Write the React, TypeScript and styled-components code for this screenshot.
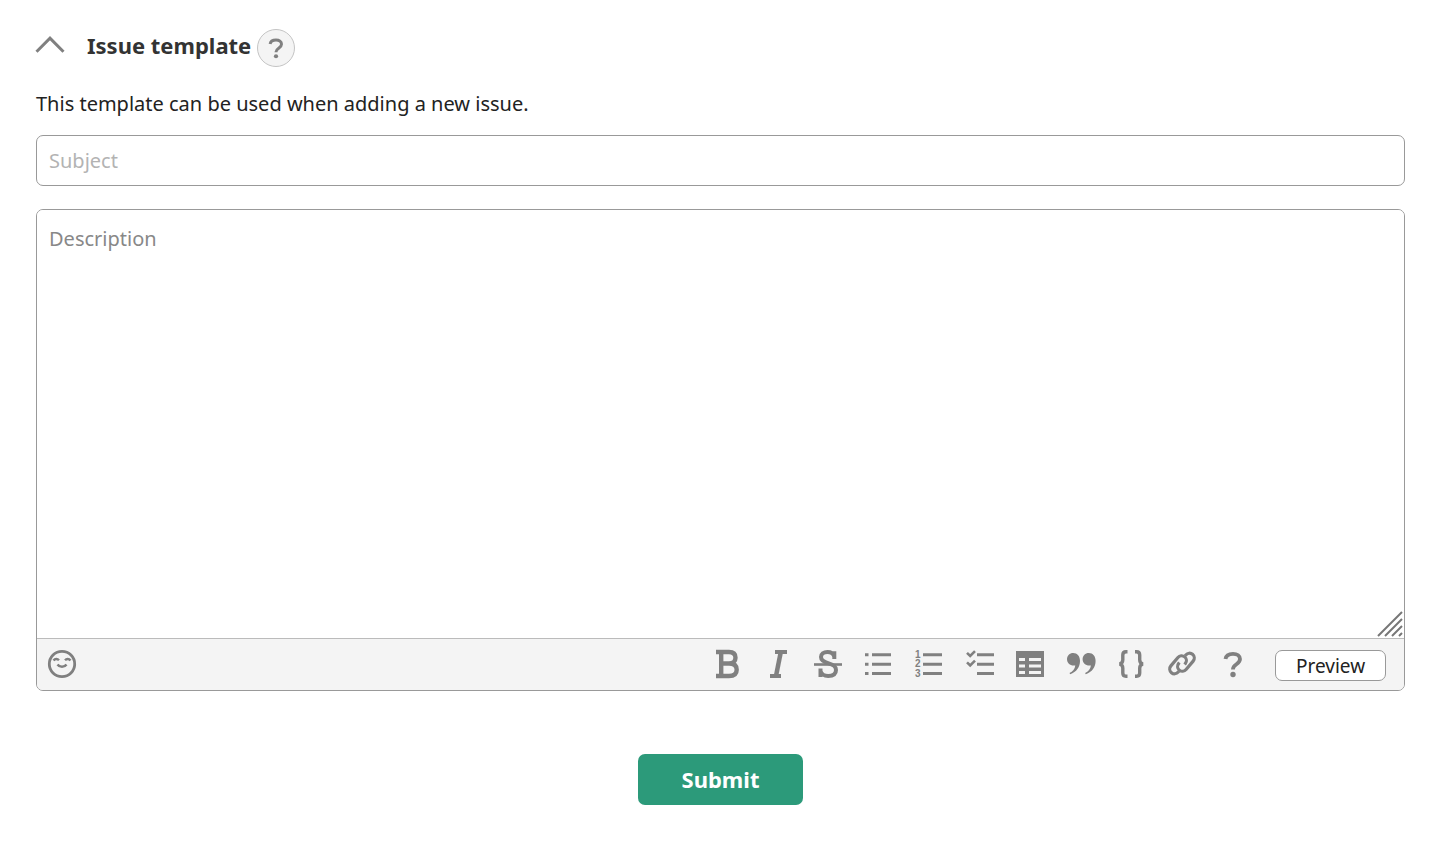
import React from "react";
import styled, { createGlobalStyle } from "styled-components";

const GlobalStyle = createGlobalStyle`
  *, *::before, *::after { box-sizing: border-box; }
  body {
    margin: 0;
    background: #fff;
    color: #222;
    font-family: "Noto Sans", "Open Sans", sans-serif;
    font-size: 20px;
    line-height: 28px;
  }
  button, input, textarea { font: inherit; }
`;

const Form = styled.form`
  display: flex;
  flex-direction: column;
  padding: 28px 49px 40px 36px;
`;

const Header = styled.header`
  display: flex;
  align-items: center;
  height: 40px;
`;

const PlainButton = styled.button`
  display: flex;
  flex: none;
  padding: 0;
  border: 0;
  background: none;
  color: #808080;
  cursor: pointer;
`;

const Title = styled.h2`
  margin: 0 6px 6px 23px;
  color: #333;
  font-size: 22px;
  font-weight: 700;
`;

const HelpButton = styled(PlainButton)`
  align-items: center;
  justify-content: center;
  width: 38px;
  height: 38px;
  border: 1px solid #c4c4c4;
  border-radius: 50%;
  background: #f4f4f4;
`;

const Hint = styled.p`
  margin: 22px 0 17px;
`;

const SubjectInput = styled.input`
  width: 100%;
  height: 51px;
  padding: 0 12px;
  border: 1px solid #999;
  border-radius: 7px;
  outline: 0;
  &::placeholder { color: #b3b3b3; opacity: 1; }
`;

const Editor = styled.div`
  margin-top: 23px;
  border: 1px solid #999;
  border-radius: 7px;
  overflow: hidden;
`;

const EditorBody = styled.div`
  position: relative;
`;

const DescriptionArea = styled.textarea`
  display: block;
  width: 100%;
  height: 428px;
  padding: 15px 12px;
  border: 0;
  outline: 0;
  resize: none;
  &::placeholder { color: #888; opacity: 1; }
`;

const ResizeGrip = styled.svg`
  position: absolute;
  right: 1px;
  bottom: 1px;
`;

const Toolbar = styled.div`
  display: flex;
  align-items: flex-start;
  height: 52px;
  padding: 11px 18px 0 11px;
  border-top: 1px solid #bbb;
  background: #f4f4f4;
`;

const Tools = styled.div`
  display: flex;
  justify-content: space-between;
  width: 534px;
  margin: 0 28px 0 auto;
`;

const PreviewButton = styled.button`
  width: 111px;
  height: 31px;
  padding: 0;
  border: 1px solid #999;
  border-radius: 7px;
  background: #fff;
  color: #222;
  font-size: 19px;
  line-height: 28px;
  cursor: pointer;
`;

const SubmitButton = styled.button`
  align-self: center;
  width: 165px;
  height: 51px;
  margin-top: 63px;
  padding: 0 0 2px;
  border: 0;
  border-radius: 7px;
  background: #2c9a7a;
  color: #fff;
  font-size: 22px;
  font-weight: 700;
  cursor: pointer;
`;

const Icon = ({ size = 28, children }: { size?: number; children: React.ReactNode }) => (
  <svg width={size} height={size} viewBox="0 0 28 28" fill="none" stroke="currentColor" overflow="visible" aria-hidden="true">
    {children}
  </svg>
);

const questionMark = (
  <>
    <path d="M6.500 9C7 5.500 10 3.800 14 3.800c4.300 0 7 2 7 5.300 0 5.300-7 4.900-7 9.900v.5" strokeWidth="3.800" />
    <circle cx="14" cy="24.500" r="2.700" fill="currentColor" stroke="none" />
  </>
);

const linkHalf = "M-8 2.600H-9a4.800 4.800 0 0 1 0-9.600H2a4.800 4.800 0 0 1 0 9.600H1";

const tools: { label: string; icon: React.ReactNode }[] = [
  {
    label: "Bold",
    icon: (
      <path
        d="M3 2h13c4.200 0 6.500 2 6.500 5.700s-2.500 5.800-6.500 5.800H9M16 13.500c5 0 7.700 2 7.700 6.200S21 26 16 26H3M8.200 2v24"
        strokeWidth="4.400"
      />
    ),
  },
  {
    label: "Italic",
    icon: (
      <>
        <path d="M11 2h12M6 26h11" strokeWidth="4" />
        <path d="M16.800 2l-4.800 24" strokeWidth="4.500" />
      </>
    ),
  },
  {
    label: "Strikethrough",
    icon: (
      <>
        <path
          d="M20.300 9V1.200M20.300 6.500C19.300 3.500 17 2 13.500 2 9.500 2 7 4 7 7c0 3.400 2.700 4.800 7 6.200 5.200 1.600 8 3 8 6.900 0 3.900-3 5.900-7.800 5.900-4 0-6.700-1.700-7.700-5M6.500 18.500v8.500"
          strokeWidth="4"
        />
        <path d="M0 14.500h28" strokeWidth="2.600" />
      </>
    ),
  },
  {
    label: "Bulleted list",
    icon: (
      <>
        <path d="M0 4.800h3.500M0 14.300h3.500M0 23.600h3.500" strokeWidth="3" />
        <path d="M7 4.800h19M7 14.300h19M7 23.600h19" strokeWidth="3" />
      </>
    ),
  },
  {
    label: "Numbered list",
    icon: (
      <>
        <path d="M8 4.800h19M8 14.300h19M8 23.600h19" strokeWidth="3" />
        <g fill="currentColor" stroke="none" fontFamily="Liberation Sans, sans-serif" fontWeight="700" fontSize="10">
          <text x="0" y="8">1</text>
          <text x="0" y="17">2</text>
          <text x="0" y="27">3</text>
        </g>
      </>
    ),
  },
  {
    label: "Task list",
    icon: (
      <>
        <path d="M11 4.800h17M11 14.300h17M11 23.600h17" strokeWidth="3" />
        <path d="M1 2.800l3.200 3.200L9 1.200M1 12.300l3.200 3.200L9 10.700" strokeWidth="2.600" />
      </>
    ),
  },
  {
    label: "Table",
    icon: (
      <path
        d="M-1 1h28v26H-1zM2 8v3h6V8zM12 8v3h12V8zM2 14.500v3h6v-3zM12 14.500v3h12v-3zM2 21v3h6v-3zM12 21v3h12v-3z"
        fill="currentColor"
        fillRule="evenodd"
        stroke="none"
      />
    ),
  },
  {
    label: "Quote",
    icon: (
      <g fill="currentColor" stroke="none">
        <path d="M6.200 3C10.300 3 13 6.200 13 11c0 6-3.500 11-9.800 13.300L2.500 23c3.300-1.800 5.300-4 5.800-7.600C3.500 16.300 0 13 0 9.200 0 5.600 2.700 3 6.200 3z" />
        <path d="M21.800 3c4.100 0 6.800 3.200 6.800 8 0 6-3.500 11-9.800 13.300l-.7-1.300c3.300-1.800 5.300-4 5.800-7.600-4.800.9-8.300-2.400-8.300-6.200C15.600 5.600 18.300 3 21.800 3z" />
      </g>
    ),
  },
  {
    label: "Code",
    icon: (
      <path
        d="M9.500 1.700H8C5.700 1.700 4.800 2.700 4.800 4.900v4.900c0 2.400-1.200 3.800-3.300 4.200 2.100.4 3.300 1.800 3.300 4.200v4.900c0 2.200.9 3.200 3.200 3.200h1.500M17 1.700h1.500c2.300 0 3.200 1 3.200 3.200v4.900c0 2.400 1.200 3.800 3.300 4.200-2.100.4-3.300 1.800-3.300 4.200v4.900c0 2.200-.9 3.200-3.200 3.200H17"
        strokeWidth="3.400"
      />
    ),
  },
  {
    label: "Link",
    icon: (
      <g strokeWidth="3.200">
        <path d={linkHalf} transform="translate(14 13.500) rotate(-50)" />
        <path d={linkHalf} transform="translate(14 13.500) rotate(130)" />
      </g>
    ),
  },
  { label: "Formatting help", icon: questionMark },
];

export default function App() {
  return (
    <>
      <GlobalStyle />
      <Form onSubmit={(event) => event.preventDefault()}>
        <Header>
          <PlainButton type="button" aria-label="Collapse section">
            <Icon>
              <path d="M.5 17.700L14 4.200l13.500 13.500" strokeWidth="3" />
            </Icon>
          </PlainButton>
          <Title>Issue template</Title>
          <HelpButton type="button" aria-label="About issue templates">
            <Icon size={22}>{questionMark}</Icon>
          </HelpButton>
        </Header>
        <Hint>This template can be used when adding a new issue.</Hint>
        <SubjectInput type="text" aria-label="Subject" placeholder="Subject" />
        <Editor>
          <EditorBody>
            <DescriptionArea aria-label="Description" placeholder="Description" />
            <ResizeGrip width="26" height="26" viewBox="0 0 26 26" stroke="#777" strokeWidth="2" aria-hidden="true">
              <path d="M1 25L25 1M8 25L25 8M15 25L25 15M22 25l3-3" />
            </ResizeGrip>
          </EditorBody>
          <Toolbar>
            <PlainButton type="button" aria-label="Insert emoji">
              <Icon>
                <circle cx="14" cy="14" r="12.700" strokeWidth="2.800" />
                <path d="M5.500 10.500c1.500-2 4-2 5.500-.3M17 10.200c1.500-1.700 4-1.700 5.500.3M9.500 14.500c2 3 7 3 9 0" strokeWidth="2.400" />
              </Icon>
            </PlainButton>
            <Tools role="group" aria-label="Formatting">
              {tools.map((tool) => (
                <PlainButton key={tool.label} type="button" aria-label={tool.label}>
                  <Icon>{tool.icon}</Icon>
                </PlainButton>
              ))}
            </Tools>
            <PreviewButton type="button">Preview</PreviewButton>
          </Toolbar>
        </Editor>
        <SubmitButton type="submit">Submit</SubmitButton>
      </Form>
    </>
  );
}
